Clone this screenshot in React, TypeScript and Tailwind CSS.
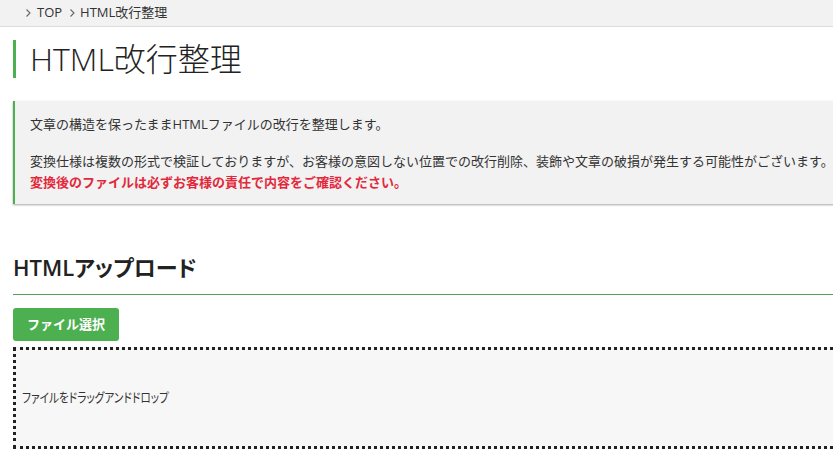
import React from "react";

const jp = "font-['Open_Sans','Noto_Sans_CJK_JP',sans-serif]";

// breadcrumb arrow
function Chevron() {
  return (
    <svg width="7" height="10" viewBox="0 0 7 10" className="shrink-0">
      <path d="M1.5 1.5 L5 5 L1.5 8.5" fill="none" stroke="#666" strokeWidth="1.1" />
    </svg>
  );
}

export default function App() {
  return (
    <div className={`w-full h-[470px] overflow-hidden bg-white text-[#333] ${jp}`}>
      {/* breadcrumb */}
      <div className="h-[27px] bg-[#f2f2f2] border-b border-[#dddddd] flex items-center pl-[25px] text-[13px] text-[#333]">
        <Chevron />
        <span className="ml-[5px] mr-[7px]">TOP</span>
        <Chevron />
        <span className="ml-[4px]">HTML改行整理</span>
      </div>

      <div className="w-[900px] pl-[13px]">
        <h1 className="mt-[13px] border-l-[3px] border-[#4caf50] pl-[14px] text-[32px] leading-[38px] font-light text-[#222]">
          HTML改行整理
        </h1>

        <div className="mt-[23px] bg-[#f2f2f2] border-l-2 border-[#4caf50] shadow-[0_1px_2px_rgba(0,0,0,0.35)] pl-[15px] pt-[13px] pb-[11px] text-[13px] leading-[21px]">
          <p>文章の構造を保ったままHTMLファイルの改行を整理します。</p>
          <p className="mt-[16px]">
            変換仕様は複数の形式で検証しておりますが、お客様の意図しない位置での改行削除、装飾や文章の破損が発生する可能性がございます。
          </p>
          <p className="font-bold text-[#e2283c]">変換後のファイルは必ずお客様の責任で内容をご確認ください。</p>
        </div>

        <h2 className="mt-[45px] pb-[9px] border-b border-[#5a9e5a] text-[22px] leading-[36px] font-semibold text-[#222] [font-feature-settings:'palt']">
          HTMLアップロード
        </h2>

        <button className="mt-[13px] h-[33px] w-[106px] rounded-[3px] bg-[#4caf50] text-white text-[13px] font-bold">
          ファイル選択
        </button>

        <div className="mt-[6px] h-[102px] border-[3px] border-dotted border-[#222] bg-[#f6f7f6] flex items-center pl-[6px] text-[13px] text-[#333] [font-feature-settings:'palt']">
          <span className="inline-block origin-left scale-x-[0.82]">ファイルをドラッグアンドドロップ</span>
        </div>
      </div>
    </div>
  );
}
